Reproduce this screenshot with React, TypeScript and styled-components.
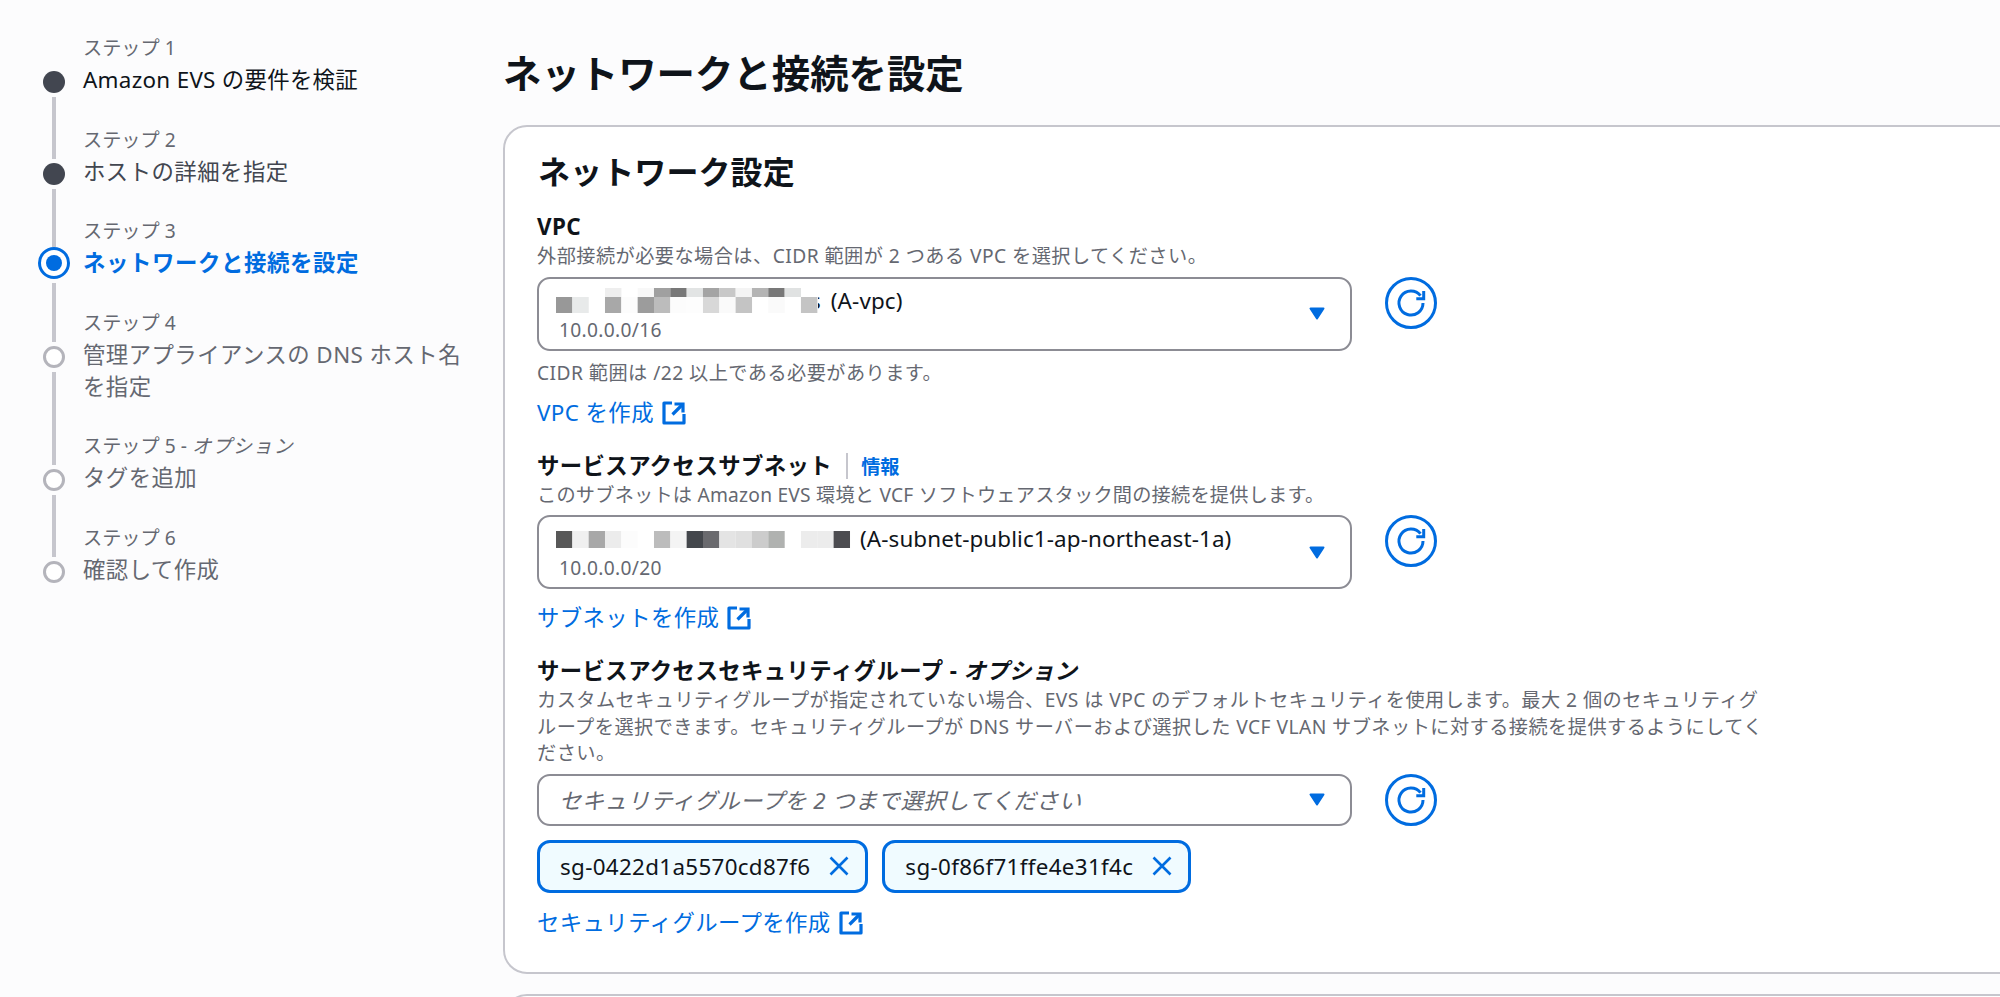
import React from "react";
import styled, { createGlobalStyle } from "styled-components";

const Global = createGlobalStyle`
  html, body { margin: 0; padding: 0; height: 100%; overflow: hidden; background: #fcfcfd; }
  body { font-family: "Noto Sans", "Noto Sans CJK JP", sans-serif; color: #0f141a; }
  #root { height: 100%; }
`;

const Page = styled.div`
  display: flex;
  width: 2000px;
  height: 997px;
  overflow: hidden;
`;

const Nav = styled.nav`
  width: 503px;
  flex: none;
  padding: 34px 0 0 24px;
  box-sizing: border-box;
  display: flex;
  flex-direction: column;
`;

const Step = styled.div`
  display: grid;
  grid-template-columns: 60px 385px;
  grid-template-rows: 30px auto;
`;

const RailTop = styled.div<{ $hidden?: boolean }>`
  justify-self: center;
  width: 4px;
  background: ${(p) => (p.$hidden ? "transparent" : "#c6c6cd")};
`;

const StepLabel = styled.div`
  font-size: 19.2px;
  line-height: 26px;
  color: #656871;
  padding-top: 1px;
  margin-left: -1px;
`;

const Optional = styled.i`
  font-style: italic;
`;

const StepOptional = styled(Optional)`
  letter-spacing: 1.2px;
`;

const Rail = styled.div`
  display: flex;
  flex-direction: column;
  align-items: center;
`;

const RailStub = styled.div<{ $hidden?: boolean; $active?: boolean }>`
  width: 4px;
  height: ${(p) => (p.$active ? "0" : "3px")};
  margin-bottom: ${(p) => (p.$active ? "7px" : "4px")};
  margin-top: ${(p) => (p.$active ? "-2px" : "0")};
  background: ${(p) => (p.$hidden ? "transparent" : "#c6c6cd")};
`;

const RailLine = styled.div<{ $hidden?: boolean; $active?: boolean }>`
  width: 4px;
  flex: 1;
  margin-top: ${(p) => (p.$active ? "9px" : "4px")};
  background: ${(p) => (p.$hidden ? "transparent" : "#c6c6cd")};
`;

const Dot = styled.div<{ $state: "done" | "active" | "todo" }>`
  box-sizing: border-box;
  flex: none;
  border-radius: 50%;
  display: flex;
  align-items: center;
  justify-content: center;
  width: 22px;
  height: 22px;
  ${(p) =>
    p.$state === "done"
      ? "background:#424650;"
      : p.$state === "todo"
      ? "background:#fff;border:3.5px solid #b4b4bb;"
      : "background:#fff;border:3.5px solid #006ce0;width:32px;height:32px;margin:-5px 0;"}
`;

const DotCore = styled.span`
  width: 16px;
  height: 16px;
  border-radius: 50%;
  background: #006ce0;
`;

const StepTitle = styled.div<{ $state: "done" | "active" | "todo"; $first?: boolean }>`
  font-size: 22.4px;
  line-height: 32px;
  letter-spacing: ${(p) => (p.$state === "active" ? "0.6px" : p.$first ? "0.3px" : "0.45px")};
  padding-bottom: 29.5px;
  margin-left: -1px;
  font-weight: ${(p) => (p.$state === "active" ? 700 : 400)};
  color: ${(p) =>
    p.$state === "active" ? "#006ce0" : p.$first ? "#0f141a" : p.$state === "done" ? "#424650" : "#656871"};
`;

const Main = styled.main`
  flex: 1;
  padding-top: 49px;
  min-width: 0;
`;

const H1 = styled.h1`
  margin: 0 0 28px;
  font-size: 38.4px;
  line-height: 48px;
  font-weight: 700;
`;

const Card = styled.section`
  box-sizing: border-box;
  width: 1560px;
  height: 849px;
  padding: 25px 0 0 32px;
  background: #fff;
  border: 2px solid #c6c6cd;
  border-radius: 24px;
  margin-bottom: 20px;
`;

const H2 = styled.h2`
  margin: 0 0 19px 1px;
  font-size: 32px;
  line-height: 40px;
  font-weight: 700;
  letter-spacing: 0.1px;
`;

const Field = styled.div`
  margin-bottom: 21px;
`;

const LabelRow = styled.div`
  display: flex;
  align-items: center;
`;

const Label = styled.span`
  font-size: 22.4px;
  line-height: 32px;
  font-weight: 700;
  letter-spacing: 0.4px;
`;

const Sep = styled.span`
  width: 2px;
  height: 26px;
  margin: 0 13px 0 14px;
  background: #c6c6cd;
`;

const Info = styled.a`
  font-size: 19.2px;
  font-weight: 700;
  color: #006ce0;
`;

const Desc = styled.div<{ $tight?: boolean }>`
  font-size: 19.2px;
  line-height: 26.6px;
  letter-spacing: ${(p) => (p.$tight ? "0.22px" : "0.45px")};
  color: #656871;
  width: 1232px;
`;

const ControlRow = styled.div`
  display: flex;
  gap: 33px;
  margin-top: 7px;
  align-items: flex-start;
`;

const Select = styled.div<{ $tall?: boolean }>`
  box-sizing: border-box;
  width: 815px;
  height: ${(p) => (p.$tall ? "74px" : "52px")};
  border: 2px solid #8c8c94;
  border-radius: 13px;
  background: #fff;
  display: flex;
  align-items: center;
  padding: 0 25px 0 20px;
`;

const SelectBody = styled.div`
  flex: 1;
  min-width: 0;
`;

const Primary = styled.div`
  font-size: 22.4px;
  line-height: 32px;
  letter-spacing: 0.12px;
  display: flex;
  align-items: center;
  white-space: pre;
`;

const Secondary = styled.div`
  font-size: 19.2px;
  line-height: 26px;
  letter-spacing: 0.3px;
  color: #656871;
`;

const Placeholder = styled.div`
  font-size: 22.4px;
  letter-spacing: 0.4px;
  font-style: italic;
  color: #656871;
`;

const Hint = styled.div`
  font-size: 19.2px;
  line-height: 26px;
  letter-spacing: 0.45px;
  color: #656871;
  margin-top: 9px;
`;

const LinkRow = styled.a<{ $gap?: string }>`
  display: flex;
  align-items: center;
  gap: 8px;
  margin-top: ${(p) => p.$gap || "11px"};
  font-size: 22.4px;
  line-height: 32px;
  letter-spacing: 0.4px;
  color: #006ce0;
`;

const Redaction = styled.svg`
  flex: none;
  display: block;
  margin-left: -3px;
  background: #fff;
  position: relative;
  z-index: 1;
`;

const Tail = styled.span`
  margin-left: -8px;
  word-spacing: 4px;
`;

const Chips = styled.div`
  display: flex;
  gap: 14px;
  margin-top: 14px;
`;

const Chip = styled.div`
  box-sizing: border-box;
  height: 53px;
  display: flex;
  align-items: center;
  gap: 19px;
  padding: 0 16px 0 20px;
  border: 3.2px solid #006ce0;
  border-radius: 13px;
  background: #f0fbff;
  font-size: 22.4px;
  letter-spacing: 0.32px;
`;

const NextCard = styled.div`
  box-sizing: border-box;
  width: 1560px;
  height: 120px;
  background: #fff;
  border: 2px solid #c6c6cd;
  border-radius: 24px;
`;

type CellRow = [number, number, number, string];

function Pixels({ w, h, cells }: { w: number; h: number; cells: CellRow[] }) {
  return (
    <Redaction width={w} height={h} viewBox={`0 0 ${w} ${h}`}>
      {cells.map(([c, y, ch, f], i) => (
        <rect key={i} x={c * 16.33} y={y} width={16.4} height={ch} fill={f} />
      ))}
    </Redaction>
  );
}

const row = (y: number, h: number, m: Record<number, string>): CellRow[] =>
  Object.entries(m).map(([c, f]) => [Number(c), y, h, f]);

const vpcCells: CellRow[] = [
  ...row(0, 9, {
    3: "#eeeeee", 5: "#f8f8f8", 6: "#a0a0a0", 7: "#787878", 8: "#e2e4e4", 9: "#a4a4a4",
    10: "#c8c8c8", 11: "#f4f4f4", 12: "#b4b4b4", 13: "#787878", 14: "#e0e2e2",
  }),
  ...row(9, 16, {
    0: "#989898", 1: "#e8eaea", 3: "#a8a8a8", 4: "#fcfcfc", 5: "#9c9c9c", 6: "#bcbcbc",
    7: "#fcfcfc", 8: "#fdfdfd", 9: "#d8d8d8", 10: "#fafafa", 11: "#c4c4c4", 13: "#fafafa", 15: "#c4c4c4",
  }),
];

const subnetCells: CellRow[] = row(0, 17, {
  0: "#585858", 1: "#f0f0f0", 2: "#a8a8a8", 3: "#ececec", 4: "#fcfcfc", 6: "#bcbcbc", 7: "#f4f4f4",
  8: "#44474c", 9: "#6a6a6e", 10: "#e4e4e4", 11: "#e0e0e0", 12: "#cccccc", 13: "#b0b2b0",
  15: "#ececec", 16: "#ececec", 17: "#4c4c50",
});

const Caret = () => (
  <svg width="16" height="13" viewBox="0 0 16 13" style={{ flex: "none" }}>
    <path d="M1.5 1.5H14.5L8 11.5Z" fill="#006ce0" stroke="#006ce0" strokeWidth="2" strokeLinejoin="round" />
  </svg>
);

const Refresh = () => (
  <svg width="52" height="52" viewBox="0 0 52 52" fill="none" stroke="#006ce0" strokeWidth="3" style={{ flex: "none" }}>
    <circle cx="26" cy="26" r="24.5" />
    <path d="M35.5 18.7A12 12 0 1 0 38 26" />
    <path d="M31.3 21.7H38.7V14" />
  </svg>
);

const External = () => (
  <svg width="24" height="24" viewBox="0 0 24 24" fill="none" stroke="#006ce0" strokeWidth="3.2" style={{ flex: "none" }}>
    <path d="M10 2H2V22H22V13" strokeLinejoin="round" />
    <path d="M12.5 3H21V11.5" />
    <path d="M20.5 3.5L10.5 13.5" />
  </svg>
);

const Close = () => (
  <svg width="20" height="20" viewBox="0 0 20 20" fill="none" stroke="#006ce0" strokeWidth="2.6" style={{ flex: "none" }}>
    <path d="M1.5 1.5L18.5 18.5M18.5 1.5L1.5 18.5" />
  </svg>
);

type StepData = {
  label: React.ReactNode;
  title: string;
  state: "done" | "active" | "todo";
};

const steps: StepData[] = [
  { label: "ステップ 1", title: "Amazon EVS の要件を検証", state: "done" },
  { label: "ステップ 2", title: "ホストの詳細を指定", state: "done" },
  { label: "ステップ 3", title: "ネットワークと接続を設定", state: "active" },
  { label: "ステップ 4", title: "管理アプライアンスの DNS ホスト名を指定", state: "todo" },
  { label: <>ステップ 5 - <StepOptional>オプション</StepOptional></>, title: "タグを追加", state: "todo" },
  { label: "ステップ 6", title: "確認して作成", state: "todo" },
];

export default function App() {
  return (
    <>
      <Global />
      <Page>
        <Nav>
          {steps.map((s, i) => (
            <Step key={i}>
              <RailTop $hidden={i === 0} />
              <StepLabel>{s.label}</StepLabel>
              <Rail>
                <RailStub $hidden={i === 0} $active={s.state === "active"} />
                <Dot $state={s.state}>{s.state === "active" && <DotCore />}</Dot>
                <RailLine $hidden={i === steps.length - 1} $active={s.state === "active"} />
              </Rail>
              <StepTitle $state={s.state} $first={i === 0}>{s.title}</StepTitle>
            </Step>
          ))}
        </Nav>
        <Main>
          <H1>ネットワークと接続を設定</H1>
          <Card>
            <H2>ネットワーク設定</H2>
            <Field>
              <LabelRow><Label>VPC</Label></LabelRow>
              <Desc>外部接続が必要な場合は、CIDR 範囲が 2 つある VPC を選択してください。</Desc>
              <ControlRow>
                <Select $tall>
                  <SelectBody>
                    <Primary>
                      <Pixels w={262} h={25} cells={vpcCells} />
                      <Tail>s (A-vpc)</Tail>
                    </Primary>
                    <Secondary>10.0.0.0/16</Secondary>
                  </SelectBody>
                  <Caret />
                </Select>
                <Refresh />
              </ControlRow>
              <Hint>CIDR 範囲は /22 以上である必要があります。</Hint>
              <LinkRow>VPC を作成<External /></LinkRow>
            </Field>
            <Field>
              <LabelRow>
                <Label>サービスアクセスサブネット</Label>
                <Sep />
                <Info>情報</Info>
              </LabelRow>
              <Desc $tight>このサブネットは Amazon EVS 環境と VCF ソフトウェアスタック間の接続を提供します。</Desc>
              <ControlRow>
                <Select $tall>
                  <SelectBody>
                    <Primary>
                      <Pixels w={298} h={17} cells={subnetCells} />
                      {" (A-subnet-public1-ap-northeast-1a)"}
                    </Primary>
                    <Secondary>10.0.0.0/20</Secondary>
                  </SelectBody>
                  <Caret />
                </Select>
                <Refresh />
              </ControlRow>
              <LinkRow $gap="13px">サブネットを作成<External /></LinkRow>
            </Field>
            <Field>
              <LabelRow>
                <Label>サービスアクセスセキュリティグループ - <Optional>オプション</Optional></Label>
              </LabelRow>
              <Desc>カスタムセキュリティグループが指定されていない場合、EVS は VPC のデフォルトセキュリティを使用します。最大 2 個のセキュリティグループを選択できます。セキュリティグループが DNS サーバーおよび選択した VCF VLAN サブネットに対する接続を提供するようにしてください。</Desc>
              <ControlRow>
                <Select>
                  <SelectBody>
                    <Placeholder>セキュリティグループを 2 つまで選択してください</Placeholder>
                  </SelectBody>
                  <Caret />
                </Select>
                <Refresh />
              </ControlRow>
              <Chips>
                <Chip>sg-0422d1a5570cd87f6<Close /></Chip>
                <Chip>sg-0f86f71ffe4e31f4c<Close /></Chip>
              </Chips>
              <LinkRow $gap="14px">セキュリティグループを作成<External /></LinkRow>
            </Field>
          </Card>
          <NextCard />
        </Main>
      </Page>
    </>
  );
}
